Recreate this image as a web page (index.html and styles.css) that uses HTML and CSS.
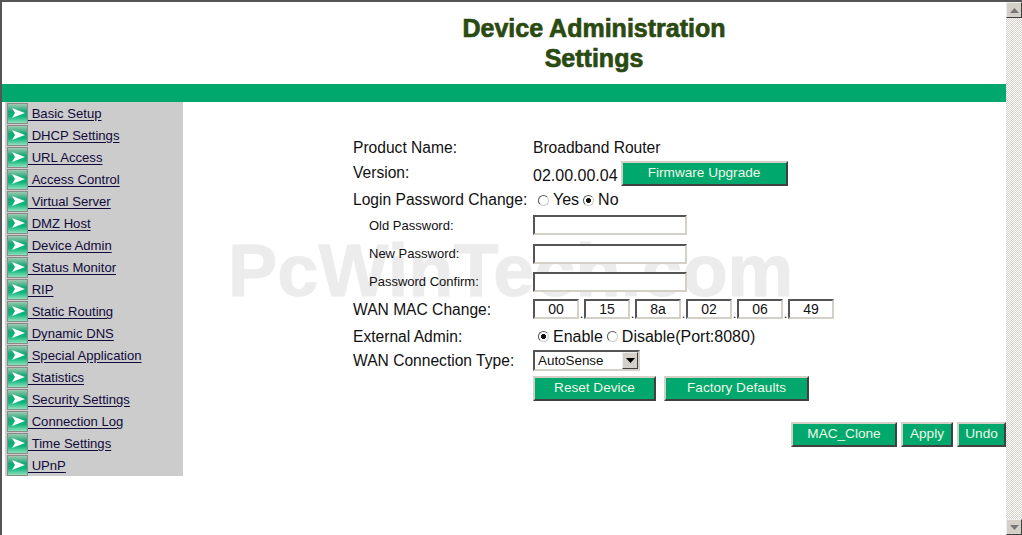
FILE: index.html
```html
<!DOCTYPE html>
<html lang="en">
<head>
<meta charset="utf-8">
<title>Device Administration Settings</title>
<link rel="stylesheet" href="styles.css">
</head>
<body>
<div class="window">
  <div class="page">
    <header class="header">
      <h1 class="title">Device Administration<br>Settings</h1>
    </header>
    <div class="band"></div>
    <div class="body-row">
      <nav class="nav">
        <a class="nav-item" href="#"><svg class="arrow" viewBox="0 0 21 21"><use href="#arrow-icon"/></svg><span class="nav-text">&nbsp;Basic Setup</span></a>
        <a class="nav-item" href="#"><svg class="arrow" viewBox="0 0 21 21"><use href="#arrow-icon"/></svg><span class="nav-text">&nbsp;DHCP Settings</span></a>
        <a class="nav-item" href="#"><svg class="arrow" viewBox="0 0 21 21"><use href="#arrow-icon"/></svg><span class="nav-text">&nbsp;URL Access</span></a>
        <a class="nav-item" href="#"><svg class="arrow" viewBox="0 0 21 21"><use href="#arrow-icon"/></svg><span class="nav-text">&nbsp;Access Control</span></a>
        <a class="nav-item" href="#"><svg class="arrow" viewBox="0 0 21 21"><use href="#arrow-icon"/></svg><span class="nav-text">&nbsp;Virtual Server</span></a>
        <a class="nav-item" href="#"><svg class="arrow" viewBox="0 0 21 21"><use href="#arrow-icon"/></svg><span class="nav-text">&nbsp;DMZ Host</span></a>
        <a class="nav-item" href="#"><svg class="arrow" viewBox="0 0 21 21"><use href="#arrow-icon"/></svg><span class="nav-text">&nbsp;Device Admin</span></a>
        <a class="nav-item" href="#"><svg class="arrow" viewBox="0 0 21 21"><use href="#arrow-icon"/></svg><span class="nav-text">&nbsp;Status Monitor</span></a>
        <a class="nav-item" href="#"><svg class="arrow" viewBox="0 0 21 21"><use href="#arrow-icon"/></svg><span class="nav-text">&nbsp;RIP</span></a>
        <a class="nav-item" href="#"><svg class="arrow" viewBox="0 0 21 21"><use href="#arrow-icon"/></svg><span class="nav-text">&nbsp;Static Routing</span></a>
        <a class="nav-item" href="#"><svg class="arrow" viewBox="0 0 21 21"><use href="#arrow-icon"/></svg><span class="nav-text">&nbsp;Dynamic DNS</span></a>
        <a class="nav-item" href="#"><svg class="arrow" viewBox="0 0 21 21"><use href="#arrow-icon"/></svg><span class="nav-text">&nbsp;Special Application</span></a>
        <a class="nav-item" href="#"><svg class="arrow" viewBox="0 0 21 21"><use href="#arrow-icon"/></svg><span class="nav-text">&nbsp;Statistics</span></a>
        <a class="nav-item" href="#"><svg class="arrow" viewBox="0 0 21 21"><use href="#arrow-icon"/></svg><span class="nav-text">&nbsp;Security Settings</span></a>
        <a class="nav-item" href="#"><svg class="arrow" viewBox="0 0 21 21"><use href="#arrow-icon"/></svg><span class="nav-text">&nbsp;Connection Log</span></a>
        <a class="nav-item" href="#"><svg class="arrow" viewBox="0 0 21 21"><use href="#arrow-icon"/></svg><span class="nav-text">&nbsp;Time Settings</span></a>
        <a class="nav-item" href="#"><svg class="arrow" viewBox="0 0 21 21"><use href="#arrow-icon"/></svg><span class="nav-text">&nbsp;UPnP</span></a>
      </nav>
      <main class="content">
        <form class="form">
          <div class="label label-first row-26">Product Name:</div>
          <div class="value value-text row-26">Broadband Router</div>

          <div class="label row-26 label-version">Version:</div>
          <div class="value row-26 value-version"><span class="version-num">02.00.00.04</span><button type="button" class="btn btn-firmware">Firmware Upgrade</button></div>

          <div class="label row-26">Login Password Change:</div>
          <div class="value row-26 radios">
            <label class="radio-label"><input class="radio" type="radio" name="pw">Yes</label>
            <label class="radio-label"><input class="radio" type="radio" name="pw" checked>No</label>
          </div>

          <div class="label-sm row-28">Old Password:</div>
          <div class="value input-cell input-cell-first row-28"><input class="text-input" type="password"></div>
          <div class="label-sm row-28">New Password:</div>
          <div class="value input-cell row-28"><input class="text-input" type="password"></div>
          <div class="label-sm row-28">Password Confirm:</div>
          <div class="value input-cell row-28"><input class="text-input" type="password"></div>

          <div class="label row-26">WAN MAC Change:</div>
          <div class="value row-26 mac">
            <input class="mac-input" value="00"><span class="dot">.</span>
            <input class="mac-input" value="15"><span class="dot">.</span>
            <input class="mac-input" value="8a"><span class="dot">.</span>
            <input class="mac-input" value="02"><span class="dot">.</span>
            <input class="mac-input" value="06"><span class="dot">.</span>
            <input class="mac-input" value="49">
          </div>

          <div class="label row-27">External Admin:</div>
          <div class="value row-27 radios">
            <label class="radio-label"><input class="radio" type="radio" name="ext" checked>Enable</label>
            <label class="radio-label"><input class="radio" type="radio" name="ext">Disable(Port:8080)</label>
          </div>

          <div class="label label-flat row-23">WAN Connection Type:</div>
          <div class="value select-cell row-23">
            <div class="select"><span class="select-text">AutoSense</span><span class="select-btn"><svg class="glyph" viewBox="0 0 9 5"><path d="M0 0h9L4.5 5z"/></svg></span></div>
          </div>

          <div class="row-29"></div>
          <div class="value row-29 actions">
            <button type="button" class="btn btn-reset">Reset Device</button>
            <button type="button" class="btn btn-factory">Factory Defaults</button>
          </div>
        </form>
        <div class="footer-actions">
          <button type="button" class="btn btn-mac">MAC_Clone</button>
          <button type="button" class="btn btn-apply">Apply</button>
          <button type="button" class="btn btn-undo">Undo</button>
        </div>
      </main>
    </div>
    <div class="watermark">PcWinTech.com</div>
  </div>
  <div class="scrollbar">
    <span class="scroll-btn"><svg class="scroll-glyph" viewBox="0 0 9 5"><path d="M4.5 0L9 5H0z"/></svg></span>
    <span class="scroll-btn"><svg class="scroll-glyph" viewBox="0 0 9 5"><path d="M0 0h9L4.5 5z"/></svg></span>
  </div>
</div>
<svg class="defs" width="0" height="0" aria-hidden="true">
  <defs>
    <linearGradient id="arrow-bg" x1="0" y1="0" x2="0" y2="1">
      <stop offset="0" stop-color="#9fc9b2"/>
      <stop offset=".4" stop-color="#12a874"/>
      <stop offset=".65" stop-color="#0bb57c"/>
      <stop offset="1" stop-color="#8fe0bc"/>
    </linearGradient>
    <symbol id="arrow-icon" viewBox="0 0 21 21">
      <rect width="21" height="21" fill="#8a8a8a"/>
      <rect x="1" y="1" width="19" height="19" fill="url(#arrow-bg)"/>
      <path d="M5 5L18 10L5 15L8 10z" fill="#fff"/>
    </symbol>
  </defs>
</svg>
</body>
</html>
```

FILE: styles.css
```css
* { box-sizing: border-box; }
html, body { margin: 0; padding: 0; height: 100%; overflow: hidden; background: #fff; }
body { font-family: "Liberation Sans", Arial, sans-serif; color: #111; }

.window { display: flex; width: 1022px; height: 535px; border-top: 2px solid #555; border-left: 2px solid #555; }
.page { position: relative; flex: 1; min-width: 0; display: flex; flex-direction: column; }

.header { height: 82px; display: flex; justify-content: flex-start; }
.title { margin: 11px 0 0 332px; width: 520px; text-align: center; font-size: 25px; line-height: 30px; font-weight: 700; color: #2b4a12; -webkit-text-stroke: .7px #2b4a12; }

.band { height: 18px; background: #00a86d; }

.body-row { display: flex; flex: 1; min-height: 0; }

.nav { margin-left: 3px; width: 178px; height: 374px; flex: none; background: #ccc; display: flex; flex-direction: column; padding-left: 2px; }
.nav-item { height: 22px; display: flex; align-items: flex-start; color: #110a3a; text-decoration: none; font-size: 13.100px; }
.arrow { width: 21px; height: 21px; flex: none; margin-top: 1px; display: block; }
.nav-text { text-decoration: underline; text-underline-offset: 2px; line-height: 19px; margin-top: 2px; white-space: nowrap; }

.content { position: relative; z-index: 1; flex: 1; min-width: 0; padding-top: 32px; }
.form { display: grid; grid-template-columns: 180px 1fr; padding-left: 170px; }

.row-26 { height: 26px; }
.row-27 { height: 27px; }
.row-28 { height: 28px; }
.row-23 { height: 23px; }
.row-29 { height: 29px; }

.label, .value { font-size: 15.600px; display: flex; align-items: center; white-space: nowrap; }
.label-first, .value-text { padding-top: 2px; }
.label-flat { padding-bottom: 2px; }
.label-sm { font-size: 13px; padding-left: 16px; padding-bottom: 4px; display: flex; align-items: center; }
.label-version { align-items: flex-start; line-height: 24px; margin-top: 1px; }
.value-version { align-items: flex-start; }
.version-num { font-size: 16px; margin-top: 4px; line-height: 24px; margin-right: 3px; }

.radios { padding-left: 5px; font-size: 16px; }
.radio-label { display: flex; align-items: center; margin-right: 4px; }
.radio { appearance: none; -webkit-appearance: none; width: 11px; height: 11px; margin: 0 4px 0 0; border-radius: 50%; border: 1px solid #555; border-right-color: #ccc; border-bottom-color: #ccc; background: #fff; flex: none; }
.radio:checked { background: radial-gradient(circle, #111 0 2.200px, #fff 2.800px); }

.input-cell { align-items: flex-start; padding-top: 3px; }
.input-cell-first { padding-top: 2px; }
.text-input { width: 154px; height: 20px; background: #fff; border: 2px solid; border-color: #555 #d4d0c8 #d4d0c8 #555; padding: 0; margin: 0; display: block; }

.mac { align-items: flex-start; padding-top: 2px; }
.mac-input { width: 46px; height: 20px; font: 14px "Liberation Sans", Arial, sans-serif; color: #111; text-align: center; background: #fff; border: 2px solid; border-color: #555 #d4d0c8 #d4d0c8 #555; padding: 0; margin: 0; }
.dot { width: 5px; font-size: 13px; text-align: center; line-height: 1; padding-top: 8px; overflow: hidden; }

.select-cell { align-items: flex-start; }
.select { width: 107px; height: 21px; display: flex; align-items: center; justify-content: space-between; background: #fff; border: 2px solid; border-color: #555 #d4d0c8 #d4d0c8 #555; font-size: 13.400px; padding-left: 3px; }
.select-btn { width: 16px; height: 17px; background: #d4d0c8; border: 1px solid; border-color: #eee #404040 #404040 #eee; display: flex; align-items: center; justify-content: center; }
.glyph { width: 9px; height: 5px; fill: #000; }

.btn { font: 13.600px "Liberation Sans", Arial, sans-serif; color: #f2f6e8; background: #00a86d; border: 2px solid; border-color: #d4d0c8 #404040 #404040 #d4d0c8; padding: 0 0 2px; margin: 0; display: block; }
.btn-firmware { width: 167px; height: 25px; margin-top: 1px; }
.actions { align-items: flex-end; gap: 8px; }
.btn-reset { width: 123px; height: 25px; margin-bottom: 1px; }
.btn-factory { width: 145px; height: 25px; margin-bottom: 1px; }

.footer-actions { display: flex; justify-content: flex-end; gap: 4px; margin-top: 20px; }
.btn-mac { width: 106px; height: 25px; }
.btn-apply { width: 52px; height: 25px; }
.btn-undo { width: 49px; height: 25px; }

.watermark { position: absolute; left: 226px; top: 229px; font-size: 74px; line-height: 80px; font-weight: 700; color: #ececec; -webkit-text-stroke: 1px #ececec; white-space: nowrap; z-index: 0; }

.scrollbar { width: 16px; flex: none; display: flex; flex-direction: column; justify-content: space-between; background: repeating-conic-gradient(#d4d0c8 0 25%, #fff 0 50%) 0 0 / 2px 2px; }
.scroll-btn { width: 16px; height: 16px; background: #d4d0c8; border: 1px solid; border-color: #eee #404040 #404040 #eee; display: flex; align-items: center; justify-content: center; }
.scroll-glyph { width: 9px; height: 5px; fill: #777; }

.defs { position: absolute; }
```
